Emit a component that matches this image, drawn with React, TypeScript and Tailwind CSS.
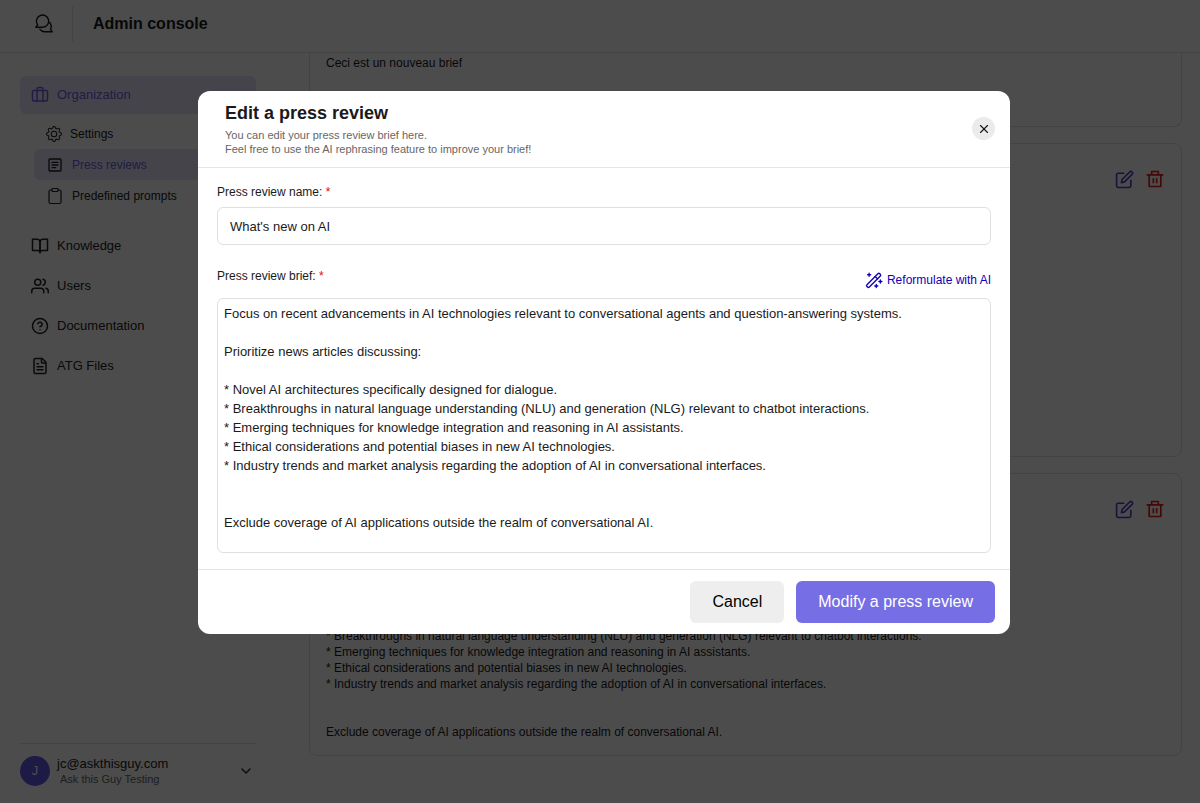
import { useState } from "react";
import { Briefcase, ChevronDown, CircleHelp, FileText, X } from "lucide-react";
import { BsGear } from "react-icons/bs";
import { FiBookOpen, FiClipboard, FiEdit, FiUsers } from "react-icons/fi";
import { RiDeleteBinLine } from "react-icons/ri";

const BRIEF = `Focus on recent advancements in AI technologies relevant to conversational agents and question-answering systems.

Prioritize news articles discussing:

* Novel AI architectures specifically designed for dialogue.
* Breakthroughs in natural language understanding (NLU) and generation (NLG) relevant to chatbot interactions.
* Emerging techniques for knowledge integration and reasoning in AI assistants.
* Ethical considerations and potential biases in new AI technologies.
* Industry trends and market analysis regarding the adoption of AI in conversational interfaces.


Exclude coverage of AI applications outside the realm of conversational AI.`;

const links = [
  { label: "Knowledge", icon: FiBookOpen },
  { label: "Users", icon: FiUsers },
  { label: "Documentation", icon: CircleHelp },
  { label: "ATG Files", icon: FileText },
];

function ChatsIcon() {
  return (
    <svg viewBox="0 0 20 20" className="size-5" fill="none" stroke="currentColor" strokeWidth="1.4" strokeLinecap="round" strokeLinejoin="round">
      <path d="M8.700 13.200H1.800L3.700 10.800A6.100 6.100 0 1 1 8.700 13.200Z" />
      <path d="M5.800 15.200A6.200 6.200 0 0 0 11.300 17.800H18.300L16.500 15.300A6.100 6.100 0 0 0 15.600 8.500" />
    </svg>
  );
}

function ArticleIcon() {
  return (
    <svg viewBox="0 0 24 24" className="size-[18px]" fill="none" stroke="currentColor" strokeWidth="1.8" strokeLinecap="round" strokeLinejoin="round">
      <rect x="4" y="4" width="16" height="16" rx="1.500" />
      <path d="M8 8.500h8M8 12h8M8 15.500h5" />
    </svg>
  );
}

function WandIcon() {
  return (
    <svg viewBox="0 0 24 24" className="size-[18px]" fill="none" stroke="currentColor" strokeWidth="1.8" strokeLinecap="round" strokeLinejoin="round">
      <path d="M2.600 18.200 17.200 3.600a1.700 1.700 0 0 1 2.400 0l.8.8a1.700 1.700 0 0 1 0 2.400L5.800 21.400a1.700 1.700 0 0 1-2.400 0l-.8-.8a1.700 1.700 0 0 1 0-2.400Z" />
      <path d="m13.500 7.300 3.200 3.200" />
      <path d="M5.500 3v4M3.500 5h4M20.500 12v4M18.500 14h4M15 18v4M13 20h4" />
    </svg>
  );
}

function CardActions() {
  return (
    <div className="flex items-center justify-end gap-[11px]">
      <button type="button" aria-label="Edit" className="text-[#4a3fc9]">
        <FiEdit className="size-[19px]" />
      </button>
      <button type="button" aria-label="Delete" className="text-[#e01b1b]">
        <RiDeleteBinLine className="size-5" />
      </button>
    </div>
  );
}

function Sidebar() {
  return (
    <aside className="flex w-[276px] shrink-0 flex-col px-5 pt-[23px] pb-[17px] text-[#222]">
      <nav className="flex flex-col">
        <a href="#organization" className="flex h-[38px] items-center gap-2 rounded-md bg-[#e7e5f8] px-[11px] text-[13px] text-[#6d5fe8]">
          <Briefcase className="size-[18px]" />
          Organization
        </a>
        <div className="mt-1 flex flex-col pl-[14px] text-[12px]">
          <a href="#settings" className="flex h-[31px] items-center gap-2 px-3">
            <BsGear className="size-4" />
            Settings
          </a>
          <a href="#press-reviews" className="flex h-[31px] items-center gap-2 rounded-md bg-[#e7e5f8] px-3 text-[#6d5fe8]">
            <span className="text-[#222]">
              <ArticleIcon />
            </span>
            Press reviews
          </a>
          <a href="#prompts" className="flex h-[31px] items-center gap-2 px-3">
            <FiClipboard className="size-[18px]" strokeWidth={1.6} />
            Predefined prompts
          </a>
        </div>
        <div className="mt-[15px] flex flex-col">
          {links.map(({ label, icon: Icon }) => (
            <a key={label} href="#" className="flex h-10 items-center gap-2 px-[11px] text-[13px]">
              <Icon className="size-[18px]" />
              {label}
            </a>
          ))}
        </div>
      </nav>
      <div className="mt-auto border-t border-[#e0e0e0] pt-3">
        <button type="button" className="flex w-full items-center gap-[7px] pr-[2px] text-left">
          <span className="flex size-[30px] items-center justify-center rounded-full bg-[#6357e8] text-[13px] text-white">J</span>
          <span className="flex flex-1 flex-col">
            <span className="text-[13px] leading-4">jc@askthisguy.com</span>
            <span className="pl-[3px] text-[11px] leading-[14px] text-[#666]">Ask this Guy Testing</span>
          </span>
          <ChevronDown className="size-4" />
        </button>
      </div>
    </aside>
  );
}

function EditDialog() {
  const [name, setName] = useState("What's new on AI");
  const [brief, setBrief] = useState(BRIEF);

  return (
    <div role="dialog" aria-modal="true" aria-labelledby="dialog-title" className="w-full max-w-[812px] rounded-xl bg-white text-[#1a1a1a]">
      <header className="flex items-center justify-between border-b border-[#e5e5e5] pt-[10px] pr-[15px] pb-[11px] pl-[27px]">
        <div>
          <h2 id="dialog-title" className="text-[18px] leading-6 font-bold">Edit a press review</h2>
          <p className="mt-[3px] text-[11px] leading-[14px] text-[#666]">
            You can edit your press review brief here.
            <br />
            Feel free to use the AI rephrasing feature to improve your brief!
          </p>
        </div>
        <button type="button" aria-label="Close" className="flex size-[23px] items-center justify-center rounded-full bg-[#ebebeb]">
          <X className="size-[14px]" />
        </button>
      </header>

      <form className="flex flex-col px-[19px] py-4">
        <label htmlFor="review-name" className="text-[12px] leading-4">
          Press review name: <span className="text-red-600">*</span>
        </label>
        <input
          id="review-name"
          value={name}
          onChange={(e) => setName(e.target.value)}
          className="mt-[7px] h-[38px] rounded-md border border-[#e0e0e0] px-3 text-[13px]"
        />
        <div className="mt-[23px] flex items-start justify-between">
          <label htmlFor="review-brief" className="text-[12px] leading-4">
            Press review brief: <span className="text-red-600">*</span>
          </label>
          <button type="button" className="mt-[3px] flex h-[18px] items-center gap-1 text-[12px] text-[#1100b8]">
            <WandIcon />
            Reformulate with AI
          </button>
        </div>
        <textarea
          id="review-brief"
          value={brief}
          onChange={(e) => setBrief(e.target.value)}
          className="mt-[9px] h-[255px] resize-none rounded-md border border-[#e0e0e0] px-[6px] py-[5px] text-[13px] leading-[19px]"
        />
      </form>

      <footer className="flex justify-end gap-3 border-t border-[#e5e5e5] px-[15px] py-[11px] text-[16px]">
        <button type="button" className="h-[42px] rounded-md bg-[#eeeeee] px-[22px] text-black">Cancel</button>
        <button type="submit" className="h-[42px] rounded-md bg-[#766ee4] px-[22px] text-white">Modify a press review</button>
      </footer>
    </div>
  );
}

export default function App() {
  return (
    <div className="flex h-screen flex-col overflow-hidden bg-white font-['Liberation_Sans',Arial,sans-serif] text-[#1a1a1a]">
      <header className="flex shrink-0 items-center border-b border-[#e0e0e0] pt-[6px] pb-[10px] pl-[34px]">
        <ChatsIcon />
        <h1 className="ml-[18px] flex h-9 items-center border-l border-[#e0e0e0] pl-5 text-[16px] font-bold">Admin console</h1>
      </header>

      <div className="flex min-h-0 flex-1">
        <Sidebar />
        <main className="flex min-w-0 flex-1 flex-col gap-4 overflow-hidden pr-[18px] pl-[33px] text-[12px] leading-4">
          <article className="h-[74px] shrink-0 rounded-b-lg border border-t-0 border-[#e0e0e0] px-4 pt-[2px]">
            Ceci est un nouveau brief
          </article>
          <article className="h-[314px] shrink-0 rounded-lg border border-[#e0e0e0] px-4 pt-[25px]">
            <CardActions />
          </article>
          <article className="flex h-[283px] shrink-0 flex-col justify-between rounded-lg border border-[#e0e0e0] px-4 pt-[25px] pb-[15px]">
            <CardActions />
            <p className="whitespace-pre-wrap">{BRIEF}</p>
          </article>
        </main>
      </div>

      <div className="fixed inset-0 flex items-start justify-center bg-black/70 pt-[91px] pl-2">
        <EditDialog />
      </div>
    </div>
  );
}
